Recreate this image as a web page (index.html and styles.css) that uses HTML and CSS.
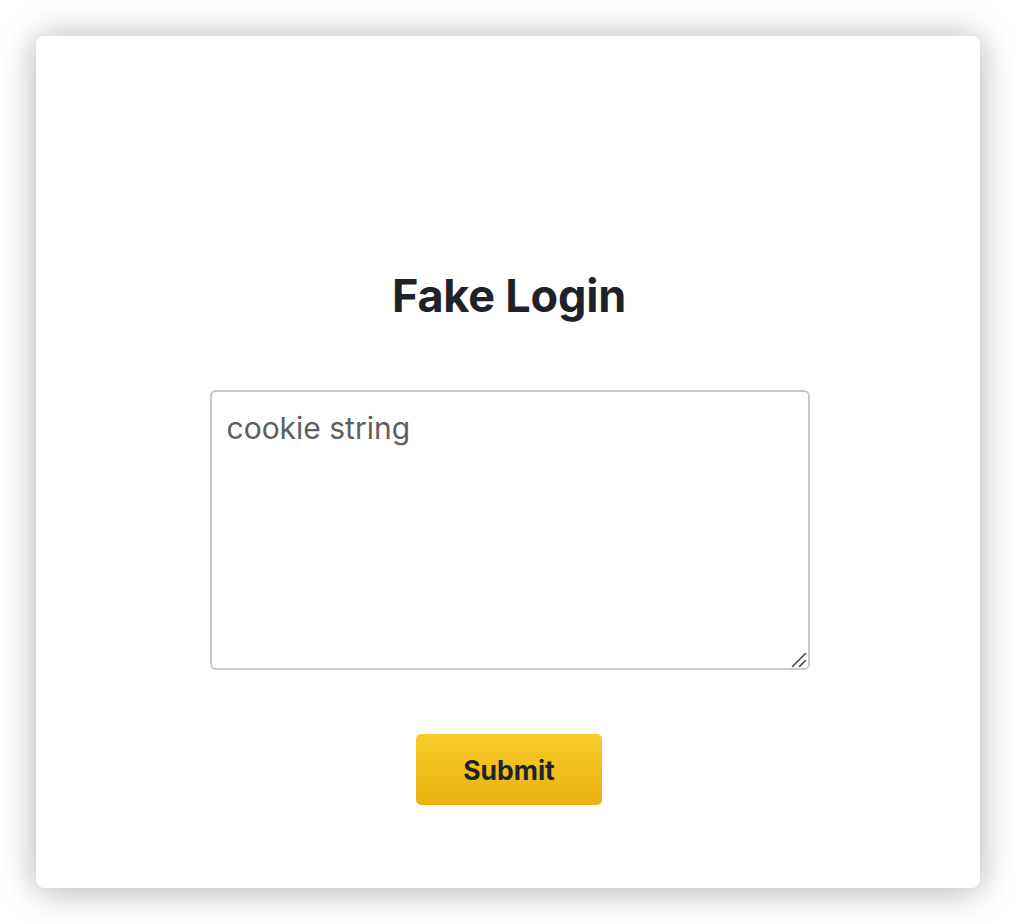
FILE: index.html
```html
<!DOCTYPE html>
<html lang="en">
<head>
<meta charset="utf-8">
<title>Fake Login</title>
<link rel="stylesheet" href="styles.css">
</head>
<body>
<main class="card">
  <h1 class="title">Fake Login</h1>
  <div class="field">
    <textarea class="cookie" placeholder="cookie string"></textarea>
    <svg class="grip" width="16" height="16" viewBox="0 0 16 16" aria-hidden="true">
      <line x1="1.5" y1="14.5" x2="14.5" y2="1.5" />
      <line x1="8.5" y1="14.5" x2="14.5" y2="8.5" />
    </svg>
  </div>
  <button class="submit" type="button">Submit</button>
</main>
</body>
</html>
```
FILE: styles.css
```css
html, body {
  margin: 0;
  height: 100%;
  background: #ffffff;
}
body {
  box-sizing: border-box;
  padding: 36px;
  font-family: "Inter", "Noto Sans", sans-serif;
}
.card {
  box-sizing: border-box;
  height: 852px;
  background: #ffffff;
  border-radius: 8px;
  box-shadow: 0 2px 36px rgba(0, 0, 0, 0.32);
  display: flex;
  flex-direction: column;
  align-items: center;
  padding-top: 232px;
}
.title {
  margin: 0 0 0 2px;
  font-size: 45px;
  line-height: 56px;
  font-weight: 700;
  color: #1e2329;
  letter-spacing: -0.2px;
}
.field {
  position: relative;
  margin-top: 66px;
  margin-left: 3px;
  width: 600px;
  height: 280px;
}
.cookie {
  display: block;
  box-sizing: border-box;
  width: 600px;
  height: 280px;
  margin: 0;
  border: 2px solid #c9c9c9;
  border-radius: 6px;
  padding: 17px 15px;
  font-family: "Inter", "Noto Sans", sans-serif;
  font-size: 30px;
  line-height: 38px;
  color: #1e2329;
  resize: none;
  outline: none;
}
.cookie::placeholder {
  color: #5f5f5f;
}
.grip {
  position: absolute;
  right: 3px;
  bottom: 2px;
  pointer-events: none;
}
.grip line {
  stroke: #4a4a4a;
  stroke-width: 1.6;
  stroke-linecap: round;
}
.submit {
  margin-top: 64px;
  margin-left: 2px;
  width: 186px;
  height: 71px;
  border: none;
  border-radius: 5px;
  background: linear-gradient(180deg, #f7cd2a 0%, #eab010 100%);
  color: #1e2329;
  font-family: "Inter", "Noto Sans", sans-serif;
  font-size: 26.5px;
  font-weight: 700;
  cursor: pointer;
}
```
